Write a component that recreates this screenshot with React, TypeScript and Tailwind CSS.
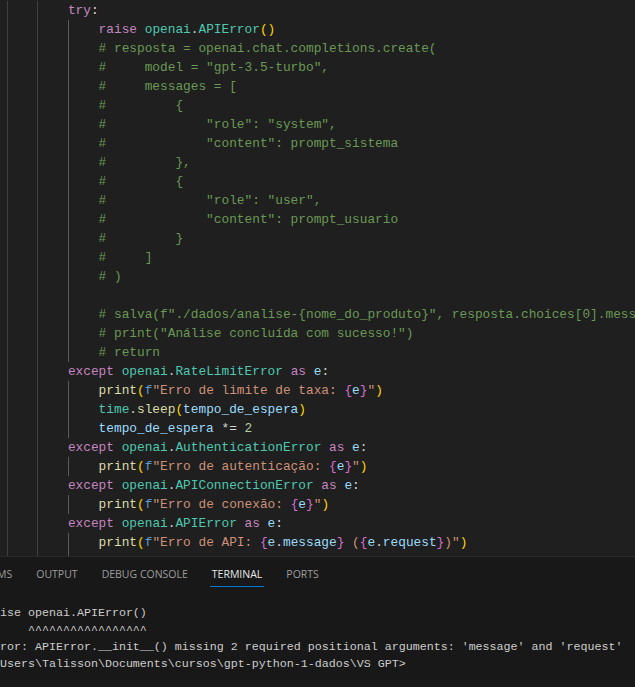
type Tok = [string, string];

interface CodeLine {
  indent: number;
  toks: Tok[];
}

const kw = 'text-[#c586c0]';
const cls = 'text-[#4ec9b0]';
const fn = 'text-[#dcdcaa]';
const str = 'text-[#ce9178]';
const vr = 'text-[#9cdcfe]';
const op = 'text-[#d4d4d4]';
const num = 'text-[#b5cea8]';
const cm = 'text-[#6a9955]';
const b1 = 'text-[#ffd700]';
const b2 = 'text-[#da70d6]';
const fp = 'text-[#569cd6]';

const comment = (text: string): CodeLine => ({ indent: 12, toks: [[cm, text]] });

const exceptLine = (name: string): CodeLine => ({
  indent: 8,
  toks: [
    [kw, 'except'],
    [op, ' '],
    [cls, 'openai'],
    [op, '.'],
    [cls, name],
    [op, ' '],
    [kw, 'as'],
    [op, ' '],
    [vr, 'e'],
    [op, ':'],
  ],
});

const printErr = (msg: string): CodeLine => ({
  indent: 12,
  toks: [
    [fn, 'print'],
    [b1, '('],
    [fp, 'f'],
    [str, `"${msg}`],
    [b2, '{'],
    [vr, 'e'],
    [b2, '}'],
    [str, '"'],
    [b1, ')'],
  ],
});

const lines: CodeLine[] = [
  { indent: 8, toks: [[kw, 'try'], [op, ':']] },
  {
    indent: 12,
    toks: [
      [kw, 'raise'],
      [op, ' '],
      [cls, 'openai'],
      [op, '.'],
      [cls, 'APIError'],
      [b1, '()'],
    ],
  },
  comment('# resposta = openai.chat.completions.create('),
  comment('#     model = "gpt-3.5-turbo",'),
  comment('#     messages = ['),
  comment('#         {'),
  comment('#             "role": "system",'),
  comment('#             "content": prompt_sistema'),
  comment('#         },'),
  comment('#         {'),
  comment('#             "role": "user",'),
  comment('#             "content": prompt_usuario'),
  comment('#         }'),
  comment('#     ]'),
  comment('# )'),
  { indent: 12, toks: [] },
  comment('# salva(f"./dados/analise-{nome_do_produto}", resposta.choices[0].message.content)'),
  comment('# print("Análise concluída com sucesso!")'),
  comment('# return'),
  exceptLine('RateLimitError'),
  printErr('Erro de limite de taxa: '),
  {
    indent: 12,
    toks: [
      [cls, 'time'],
      [op, '.'],
      [fn, 'sleep'],
      [b1, '('],
      [vr, 'tempo_de_espera'],
      [b1, ')'],
    ],
  },
  {
    indent: 12,
    toks: [
      [vr, 'tempo_de_espera'],
      [op, ' *= '],
      [num, '2'],
    ],
  },
  exceptLine('AuthenticationError'),
  printErr('Erro de autenticação: '),
  exceptLine('APIConnectionError'),
  printErr('Erro de conexão: '),
  exceptLine('APIError'),
  {
    indent: 12,
    toks: [
      [fn, 'print'],
      [b1, '('],
      [fp, 'f'],
      [str, '"Erro de API: '],
      [b2, '{'],
      [vr, 'e'],
      [op, '.'],
      [vr, 'message'],
      [b2, '}'],
      [str, ' ('],
      [b2, '{'],
      [vr, 'e'],
      [op, '.'],
      [vr, 'request'],
      [b2, '}'],
      [str, ')"'],
      [b1, ')'],
    ],
  },
  { indent: 12, toks: [] },
];

const tabs = ['PROBLEMS', 'OUTPUT', 'DEBUG CONSOLE', 'TERMINAL', 'PORTS'];

const terminal = [
  '    raise openai.APIError()',
  '          ^^^^^^^^^^^^^^^^^',
  "TypeError: APIError.__init__() missing 2 required positional arguments: 'message' and 'request'",
  'PS C:\\Users\\Talisson\\Documents\\cursos\\gpt-python-1-dados\\VS GPT>',
];

function Line({ line }: { line: CodeLine }) {
  const guides = Array.from({ length: line.indent / 4 }, (_, i) => i);
  return (
    <div className="flex h-[19px] whitespace-pre pl-[6.5px] leading-[19px]">
      {guides.map((g) => (
        <span
          key={g}
          className={
            g === 2
              ? 'h-full w-[4ch] shrink-0 border-l border-[#5a5a5a]'
              : 'h-full w-[4ch] shrink-0 border-l border-[#404040]'
          }
        />
      ))}
      <span className="shrink-0">
        {line.toks.map(([c, t], i) => (
          <span key={i} className={c}>
            {t}
          </span>
        ))}
      </span>
    </div>
  );
}

export default function App() {
  return (
    <div className="flex h-[687px] w-[635px] flex-col overflow-hidden bg-[#1f1f1f]">
      {/* editor */}
      <div className="h-[556px] shrink-0 overflow-hidden pt-[1px] font-['Liberation_Mono',monospace] text-[12.8px] text-[#d4d4d4]">
        {lines.map((l, i) => (
          <Line key={i} line={l} />
        ))}
      </div>

      {/* panel */}
      <div className="flex-1 overflow-hidden border-t border-[#2b2b2b] bg-[#181818]">
        <div className="ml-[-54px] flex h-[35px] items-center font-['Open_Sans',sans-serif] text-[10.5px]">
          {tabs.map((t) => (
            <div key={t} className="shrink-0 px-[10px]">
              <span
                className={
                  t === 'TERMINAL'
                    ? 'block border-b border-[#0078d4] px-[2px] leading-[24px] text-[#e7e7e7]'
                    : 'block border-b border-transparent px-[2px] leading-[24px] text-[#9d9d9d]'
                }
              >
                {t}
              </span>
            </div>
          ))}
        </div>

        <div className="ml-[-42px] pt-[13px] font-['Liberation_Mono',monospace] text-[11.67px] leading-[17px] text-[#cccccc]">
          {terminal.map((t, i) => (
            <div key={i} className="whitespace-pre">
              {t}
            </div>
          ))}
        </div>
      </div>
    </div>
  );
}
